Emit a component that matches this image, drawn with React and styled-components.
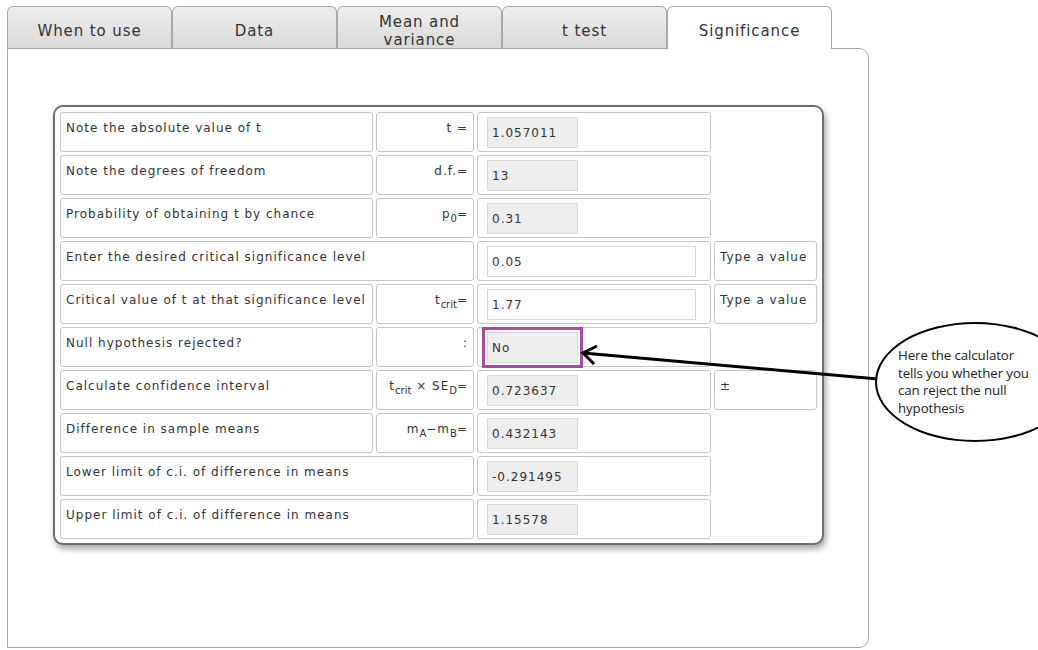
import React from 'react'
import styled, { createGlobalStyle } from 'styled-components'

const GlobalStyle = createGlobalStyle`
  html, body {
    margin: 0;
    padding: 0;
    overflow: hidden;
    background: #fff;
  }
  body {
    font-family: "DejaVu Sans", Verdana, sans-serif;
    color: #333;
  }
`

const Page = styled.div`
  position: relative;
  width: 1038px;
  height: 650px;
  padding: 6px 0 0 7px;
  box-sizing: border-box;
`

const TabBar = styled.div`
  display: flex;
  align-items: flex-start;
  height: 42px;
  position: relative;
  z-index: 1;
`

const Tab = styled.div`
  width: 165px;
  height: ${p => (p.$active ? '43px' : '42px')};
  box-sizing: border-box;
  border: 1px solid #a8a8a8;
  border-bottom: none;
  border-radius: 6px 6px 0 0;
  background: ${p => (p.$active ? '#fff' : 'linear-gradient(#eeeeee, #dadada)')};
  display: flex;
  align-items: center;
  justify-content: center;
  text-align: center;
  padding-top: 6px;
  font-size: 15px;
  letter-spacing: 0.9px;
  line-height: 18px;
  color: #333;
`

const Panel = styled.div`
  width: 862px;
  height: 600px;
  box-sizing: border-box;
  border: 1px solid #a8a8a8;
  border-radius: 0 10px 10px 0;
  padding: 56px 0 0 45px;
`

const Card = styled.div`
  width: fit-content;
  border: 2px solid #6e6e6e;
  border-radius: 10px;
  padding: 5px 5px 4px 5px;
  box-shadow: 2px 4px 6px rgba(0, 0, 0, 0.35);
  background: #fff;
`

const Grid = styled.div`
  display: grid;
  grid-template-columns: 313px 98px 234px 103px;
  grid-auto-rows: 40px;
  gap: 3px;
`

const Cell = styled.div`
  box-sizing: border-box;
  border: 1px solid ${p => (p.$empty ? 'transparent' : '#c6c6c6')};
  border-radius: 3px;
  padding: 7px 5px 0 5px;
  font-size: 12px;
  letter-spacing: 1px;
  line-height: 16px;
  color: #333;
  white-space: nowrap;
  text-align: ${p => (p.$right ? 'right' : 'left')};
  grid-column: ${p => (p.$span ? `span ${p.$span}` : 'auto')};
`

const ValueCell = styled.div`
  box-sizing: border-box;
  border: 1px solid #c6c6c6;
  border-radius: 3px;
  padding: 4px 9px;
`

const Sub = styled.sub`
  font-size: 10px;
  letter-spacing: 0;
  vertical-align: -4px;
  line-height: 0;
`

const Field = styled.input`
  display: block;
  box-sizing: border-box;
  width: ${p => (p.$wide ? '209px' : '91px')};
  height: 31px;
  margin: 0;
  padding: 1px 4px 0;
  border: 1px solid ${p => (p.$wide ? '#d6d6d6' : '#dadada')};
  border-radius: 0;
  background: ${p => (p.$wide ? '#fff' : '#eeeeee')};
  font-family: "DejaVu Sans", Verdana, sans-serif;
  font-size: 12px;
  letter-spacing: 1px;
  color: #333;
  outline: ${p => (p.$marked ? '3px solid #a64ca6' : 'none')};
  outline-offset: 2px;
`

const Arrow = styled.svg`
  position: absolute;
  left: 0;
  top: 0;
  pointer-events: none;
  z-index: 2;
`

const Bubble = styled.div`
  position: absolute;
  left: 875px;
  top: 322px;
  width: 200px;
  height: 120px;
  box-sizing: border-box;
  border: 2.5px solid #000;
  border-radius: 50%;
  background: #fff;
  z-index: 3;
`

const BubbleText = styled.div`
  position: absolute;
  left: 898px;
  top: 347px;
  z-index: 4;
  font-family: "Open Sans", "Liberation Sans", sans-serif;
  font-size: 13.3px;
  letter-spacing: -0.1px;
  line-height: 17.5px;
  color: #222;
  white-space: nowrap;
`

const tabs = ['When to use', 'Data', <>Mean and<br />variance</>, 't test', 'Significance']

const rows = [
  { label: 'Note the absolute value of t', sym: 't =', value: '1.057011' },
  { label: 'Note the degrees of freedom', sym: 'd.f.=', value: '13' },
  { label: 'Probability of obtaining t by chance', sym: <>p<Sub>0</Sub>=</>, value: '0.31' },
  { label: 'Enter the desired critical significance level', value: '0.05', wide: true, extra: 'Type a value' },
  { label: 'Critical value of t at that significance level', sym: <>t<Sub>crit</Sub>=</>, value: '1.77', wide: true, extra: 'Type a value' },
  { label: 'Null hypothesis rejected?', sym: ':', value: 'No', marked: true },
  { label: 'Calculate confidence interval', sym: <>t<Sub>crit</Sub> × SE<Sub>D</Sub>=</>, value: '0.723637', extra: '±' },
  { label: 'Difference in sample means', sym: <>m<Sub>A</Sub>−m<Sub>B</Sub>=</>, value: '0.432143' },
  { label: 'Lower limit of c.i. of difference in means', value: '-0.291495' },
  { label: 'Upper limit of c.i. of difference in means', value: '1.15578' },
]

export default function App() {
  return (
    <>
      <GlobalStyle />
      <Page>
        <TabBar>
          {tabs.map((t, i) => (
            <Tab key={i} $active={i === 4}>{t}</Tab>
          ))}
        </TabBar>
        <Panel>
          <Card>
            <Grid>
              {rows.map((r, i) => (
                <React.Fragment key={i}>
                  {r.sym === undefined ? (
                    <Cell $span={2}>{r.label}</Cell>
                  ) : (
                    <>
                      <Cell>{r.label}</Cell>
                      <Cell $right>{r.sym}</Cell>
                    </>
                  )}
                  <ValueCell>
                    <Field readOnly value={r.value} $wide={r.wide} $marked={r.marked} />
                  </ValueCell>
                  <Cell $empty={!r.extra}>{r.extra}</Cell>
                </React.Fragment>
              ))}
            </Grid>
          </Card>
        </Panel>

        <Arrow width="1038" height="650">
          <line x1="878" y1="379" x2="583" y2="353" stroke="#000" strokeWidth="3" />
          <polyline points="597,346 583,353 594,364" fill="none" stroke="#000" strokeWidth="3" />
        </Arrow>
        <Bubble />
        <BubbleText>
          Here the calculator<br />
          tells you whether you<br />
          can reject the null<br />
          hypothesis
        </BubbleText>
      </Page>
    </>
  )
}
